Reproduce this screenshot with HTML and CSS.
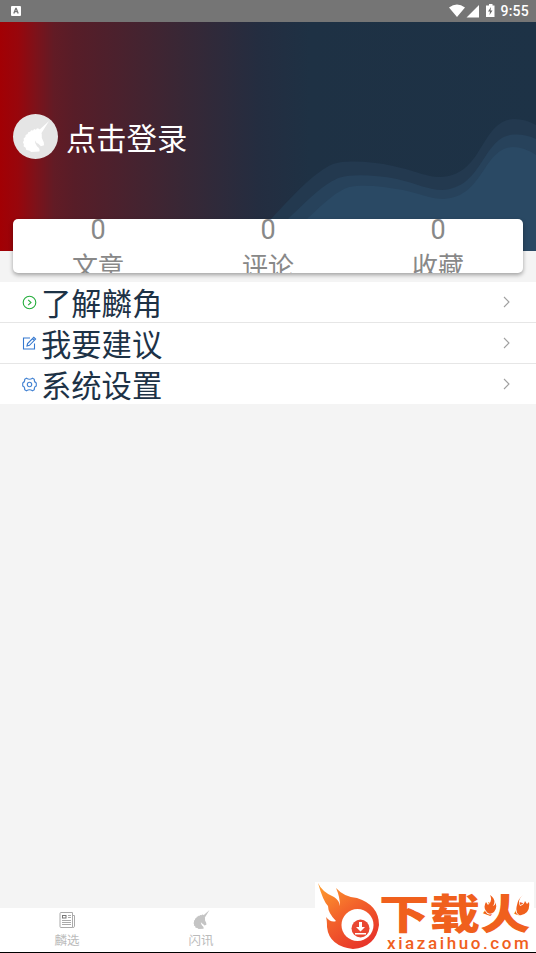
FILE: index.html
```html
<!DOCTYPE html>
<html lang="zh-CN">
<head>
<meta charset="utf-8">
<title>我的</title>
<link rel="stylesheet" href="styles.css">
</head>
<body>
<svg class="defs" width="0" height="0">
  <symbol id="unicorn" viewBox="0 0 28 32">
    <path d="M27.500 0 17.500 9 19.400 13ZM17 8 15 7.500 14 9 12 8.300 11 9.800 9 9.500 8 11 6 11.500 5.300 13.300 3.300 14.500 3 16.500 1.200 18 1.500 20 .5 22 1.500 24 1.200 26 3.300 27.500 4 30 7 30.500 9 32 17.500 31.500Q18.500 28.500 15 26Q12.500 23 13 20Q14 22.500 16.500 23.500L19 26 22.300 25 22 22 20 17.500Q20.500 13 18.500 9.500Z"/>
  </symbol>
</svg>
<div class="screen">
  <header class="status">
    <svg width="10" height="10" viewBox="0 0 10 10"><rect width="10" height="10" rx="1" fill="#fff"/><path d="M2.800 7.500 4.800 2.500H5.200L7.200 7.500M3.700 5.700H6.300" fill="none" stroke="#777" stroke-width="1.300"/></svg>
    <div class="status-right">
      <svg width="47" height="16" viewBox="0 0 47 16" fill="#fff"><path d="M0 4.500Q8 -1.500 16 4.500L8 14ZM30 2V14.500H17.500ZM38 2.500H40V1H43.500V2.500H45.500V14H37V2.500Z"/><path d="M42 4 39 8.500H41L40.500 12 43.500 7.500H41.500Z" fill="#666"/></svg>
      <span>9:55</span>
    </div>
  </header>
  <section class="hero">
    <svg class="waves" width="536" height="229" viewBox="0 22 536 229">
      <path fill="#23394f" d="M240 251 272 218C298 190 315 172 333 164C344 160 372 161 393 166C416 171 427 177 440 177C484 176 480 120 514 119Q526 119 536 125V251Z"/>
      <path fill="#27425b" d="M256 251 289 218C313 195 325 183 340 177.500C353 174 375 175 397 179C418 184 429 190 442 190C484 188 482 136 514 134.500Q526 134 536 139V251Z"/>
      <path fill="#2a4964" d="M272 251 308 218C326 201 337 191 349 187C365 184 385 187 403 190C420 194 432 199 444 199C484 197 482 149 513 147Q524 147 536 155V251Z"/>
    </svg>
    <div class="login">
      <div class="avatar"><svg width="28" height="31"><use href="#unicorn"/></svg></div>
      <span>点击登录</span>
    </div>
  </section>
  <section class="stats">
    <div><b>0</b><span>文章</span></div>
    <div><b>0</b><span>评论</span></div>
    <div><b>0</b><span>收藏</span></div>
  </section>
  <nav class="menu">
    <div class="row">
      <svg class="ico" viewBox="0 0 15 15" stroke="#25ad3c"><circle cx="7.500" cy="7.500" r="6.300"/><path d="M6.200 4.800 9 7.500 6.200 10.200"/></svg>
      <span>了解麟角</span><svg class="arrow" viewBox="0 0 7 12"><path d="M1 1 6 6 1 11"/></svg>
    </div>
    <div class="row">
      <svg class="ico" viewBox="0 0 15 15" stroke="#3478cf"><path d="M8 2H1.500V13H12.500V7.500M5 10 5.600 7.500 11.800 1.300 13.600 3.100 7.500 9.300ZM10.500 2.700 12.200 4.500"/></svg>
      <span>我要建议</span><svg class="arrow" viewBox="0 0 7 12"><path d="M1 1 6 6 1 11"/></svg>
    </div>
    <div class="row">
      <svg class="ico" viewBox="0 0 15 15" stroke="#4584d3"><path d="M4.500 1.200Q7.500 3.200 10.500 1.200L12.300 2.300Q12 5.300 14.300 6V9Q12 9.700 12.300 12.700L10.500 13.800Q7.500 11.800 4.500 13.800L2.700 12.700Q3 9.700 .7 9V6Q3 5.300 2.700 2.300Z"/><circle cx="7.500" cy="7.500" r="2.200"/></svg>
      <span>系统设置</span><svg class="arrow" viewBox="0 0 7 12"><path d="M1 1 6 6 1 11"/></svg>
    </div>
  </nav>
  <footer class="tabs">
    <div class="tab">
      <svg width="17" height="17" viewBox="0 0 17 17" fill="none" stroke="#aaa"><path d="M1 1.500Q1 .5 2 .5H13.500V15.500H2Q1 15.500 1 14.500ZM13.500 3.500H15.500V14.500Q15.500 15.500 13.500 15.500M9 3.500H12M9 5.500H12M3 8.500H12M3 10.500H12M3 12.500H12"/><rect x="3.500" y="3.500" width="3.500" height="2.500" stroke="#777"/></svg>
      <span>麟选</span>
    </div>
    <div class="tab">
      <svg class="uni" width="17" height="19"><use href="#unicorn"/></svg>
      <span>闪讯</span>
    </div>
  </footer>
  <aside class="brand">
    <strong>下载火</strong>
    <em>xiazaihuo.com</em>
    <svg class="flame" width="219" height="70" viewBox="0 0 219 70">
      <defs><linearGradient id="fire" x1="0" y1="0" x2=".65" y2="1"><stop offset="0" stop-color="#ffa02f"/><stop offset=".5" stop-color="#f3642b"/><stop offset="1" stop-color="#e8362a"/></linearGradient></defs>
      <path fill="url(#fire)" d="M3 1Q7 10 19 15Q24 18 25 24Q25 15 21 6Q29 15 42 16Q64 23 64 43Q61 65 38 67Q14 64 12 45Q12 38 11 35Q16 41 21 39Q13 31 13 24Q8 19 3 1Z"/>
      <circle cx="42.500" cy="43" r="16" fill="#fff"/><circle cx="45.500" cy="46.500" r="9" fill="#e94732"/>
      <path fill="#fff" d="M44 40H47V45H50L45.500 49.500 41 45H44ZM40 51H51V52.500H40Z"/>
      <path class="sparks" d="M175 13Q182 18 178 24Q181 23 180 20Q183 25 179 30Q174 34 171 29Q168 25 171 20L173 23Q178 19 175 13ZM208 13Q202 18 205 24Q209 23 210 19L212 22 214 20Q215 26 212 30Q208 34 204 33Q200 30 202 23Q203 17 208 13Z"/>
    </svg>
  </aside>
</div>
</body>
</html>
```
FILE: styles.css
```css
* { box-sizing: border-box; }
body { margin: 0; font-family: Roboto, "Noto Sans CJK SC", sans-serif; }
.defs { position: absolute; }
.screen { position: relative; display: flex; flex-direction: column; width: 536px; height: 953px; background: #f4f4f4; overflow: hidden; border-bottom: 1px solid #000; }
.status { display: flex; align-items: center; justify-content: space-between; height: 22px; padding: 0 7px 0 11px; background: #757575; color: #fff; font-size: 14px; font-weight: 500; flex: none; }
.status-right { display: flex; align-items: center; gap: 4px; }
.status-right span { letter-spacing: .25px; }
.hero { position: relative; flex: none; height: 228.500px; padding: 92px 13px 0; background: linear-gradient(90deg, #a20004 0, #98060c 18px, #7d121a 36px, #621b25 54px, #571d28 75px, #392735 180px, #242d40 258px, #1e3144 310px, #1d3246 100%); overflow: hidden; }
.waves { position: absolute; left: 0; top: 0; }
.login { position: relative; display: flex; align-items: center; gap: 8px; color: #fff; font-size: 30.300px; line-height: 45px; }
.login span { position: relative; top: 3px; }
.avatar { width: 45px; height: 45px; border-radius: 50%; background: #e5e5e5; padding: 7px 0 0 8.500px; fill: #fff; line-height: 0; flex: none; }
.stats { position: relative; display: flex; flex: none; margin: -31.500px 13px 0; height: 54px; border-radius: 5px; background: #fff; box-shadow: 0 2px 4px rgba(0,0,0,.35); overflow: hidden; color: #888; font-size: 26px; }
.stats div { flex: 1; display: flex; flex-direction: column; align-items: center; margin-top: -6px; }
.stats b { font-weight: 400; font-size: 27px; line-height: 35px; }
.stats span { line-height: 38px; }
.menu { margin-top: 9px; background: #fff; flex: none; }
.row { display: flex; align-items: center; height: 41px; padding: 0 26px 0 22px; border-bottom: 1px solid #e6e6e6; color: #1d3246; font-size: 30.300px; line-height: 40px; }
.row:last-child { border: 0; height: 40px; }
.row span { flex: 1; margin-left: 4px; position: relative; top: 3px; }
.ico { width: 15px; height: 15px; fill: none; stroke-width: 1.100; }
.arrow { width: 7px; height: 12px; fill: none; stroke: #a0a0a0; stroke-width: 1.100; }
.tabs { display: flex; height: 44px; margin-top: auto; background: #fff; flex: none; }
.tab { width: 134px; display: flex; flex-direction: column; align-items: center; padding-top: 4px; color: #bbb; font-size: 12.500px; line-height: 16px; gap: 4px; }
.tab svg { flex: none; }
.tab .uni { fill: #c4c4c4; margin-top: -2px; }
.brand { position: absolute; left: 315px; top: 882px; width: 219px; height: 70px; background: #fff; color: #f0601d; }
.flame { position: absolute; left: 0; top: 0; }
.sparks { fill: #f0601d; stroke: #fff; stroke-width: 1.500; paint-order: stroke; }
.brand strong { position: absolute; left: 64px; top: 8px; font: 900 50.500px/44px "Noto Sans CJK SC", sans-serif; white-space: nowrap; transform: scaleY(.82); transform-origin: 0 40%; }
.brand em { position: absolute; left: 72px; top: 53px; font: 500 17px/16px Roboto, sans-serif; letter-spacing: 2.600px; white-space: nowrap; }
```
